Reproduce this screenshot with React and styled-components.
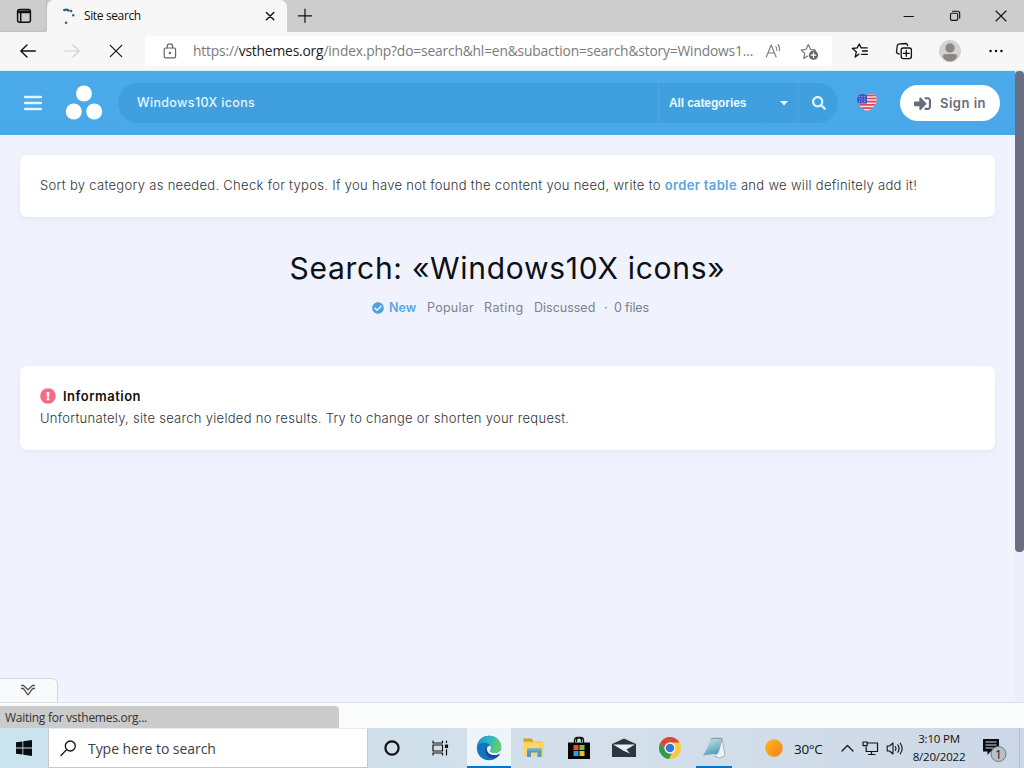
import React from 'react';
import styled, { createGlobalStyle } from 'styled-components';
import { FaSearch, FaSignInAlt, FaCheckCircle, FaExclamationCircle } from 'react-icons/fa';

const GlobalStyle = createGlobalStyle`
  * { box-sizing: border-box; }
  body { margin: 0; overflow: hidden; }
  svg { display: block; flex: none; }
`;

const segoe = `'Open Sans', 'Noto Sans', sans-serif`;
const mont = `Inter, 'Open Sans', sans-serif`;

const Screen = styled.div`
  width: 1024px;
  height: 768px;
  display: flex;
  flex-direction: column;
  overflow: hidden;
  background: #f0f3fe;
  font-family: ${segoe};
  color: #111;
`;

// one text part for everything, size and tracking vary
const Text = styled.span`
  white-space: nowrap;
  font-size: ${p => p.$size || 13}px;
  font-weight: ${p => p.$weight || 400};
  letter-spacing: ${p => p.$track || 0}px;
  color: ${p => p.$color || 'inherit'};
  line-height: 18px;
`;

const SiteLabel = styled(Text)`
  font-family: ${mont};
`;

const CategoryName = styled(Text)`
  font-family: 'Liberation Sans', Arial, sans-serif;
  font-size: 12px;
  font-weight: 700;
  letter-spacing: -0.1px;
  color: #e9faff;
`;

/* ---------- browser ---------- */
const TabStrip = styled.div`
  height: 32px;
  display: flex;
  background: #cdcdcd;
`;

const TabActions = styled.div`
  width: 47px;
  display: flex;
  align-items: center;
  justify-content: center;
  border-radius: 0 0 5px 0;
  box-shadow: inset -1px -1px 0 #bfbfbf;
`;

const Tab = styled.div`
  width: 240px;
  padding: 0 10px 0 14px;
  display: flex;
  align-items: center;
  background: #f7f7f7;
  border-radius: 7px 7px 0 0;
`;

const TabTitle = styled.div`
  flex: 1;
  display: flex;
  padding-left: 8px;
`;

const NewTab = styled.div`
  width: 36px;
  display: flex;
  align-items: center;
  justify-content: center;
`;

const WindowButtons = styled.div`
  margin-left: auto;
  display: flex;
`;

const WindowButton = styled.div`
  width: 46px;
  display: flex;
  align-items: center;
  justify-content: center;
`;

const Toolbar = styled.div`
  height: 39px;
  display: flex;
  align-items: center;
  background: #f7f7f7;
  border-bottom: 1px solid #d9f1f3;
`;

const ToolButton = styled.div`
  width: ${p => p.$w || 44}px;
  flex: none;
  display: flex;
  align-items: center;
  justify-content: center;
`;

const AddressBar = styled.div`
  width: 687px;
  height: 30px;
  margin-left: 1px;
  margin-right: 6px;
  padding-left: 18px;
  display: flex;
  align-items: center;
  background: #fff;
  border-radius: 4px;
`;

const Url = styled.div`
  width: 588px;
  padding: 0 0 0 16px;
  flex: none;
  display: flex;
`;

/* ---------- site ---------- */
const Viewport = styled.div`
  height: 631px;
  display: flex;
`;

const Page = styled.div`
  width: 1015px;
`;

const Scroll = styled.div`
  width: 9px;
  background: #eceefa;
`;

const Thumb = styled.div`
  height: 481px;
  background: #6b6e82;
  border-radius: 4px;
`;

const Header = styled.div`
  height: 64px;
  padding: 0 15px 0 24px;
  display: flex;
  align-items: center;
  background: linear-gradient(#4babe9, #48a8ea);
`;

const Logo = styled.div`
  width: 76px;
  padding-left: 23px;
`;

const SearchBox = styled.div`
  width: 720px;
  height: 40px;
  margin-right: 19px;
  display: flex;
  border-radius: 20px;
  background: #409fdf;
`;

const SearchPart = styled.div`
  width: ${p => p.$w}px;
  padding: ${p => p.$pad || 0};
  display: flex;
  align-items: center;
  justify-content: ${p => p.$justify || 'flex-start'};
  border-left: ${p => (p.$line ? '1px solid #4da7e6' : 'none')};
`;

const SignIn = styled.div`
  width: 100px;
  height: 36px;
  margin-left: auto;
  padding-left: 14px;
  display: flex;
  align-items: center;
  gap: 9px;
  border-radius: 18px;
  background: #fff;
  color: #676b7e;
`;

const Content = styled.div`
  padding: 20px 20px 0;
  display: flex;
  flex-direction: column;
`;

const Card = styled.div`
  height: ${p => p.$h}px;
  padding: ${p => p.$pad};
  border-radius: 7px;
  background: #fff;
  box-shadow: 0 1px 3px rgba(90, 100, 120, 0.06), 0 5px 14px rgba(120, 140, 130, 0.05);
`;

const Title = styled.h1`
  margin: 29px 0 0;
  height: 44px;
  text-align: center;
  font-family: ${mont};
  font-size: 30px;
  font-weight: 400;
  line-height: 44px;
  letter-spacing: 0.72px;
  white-space: nowrap;
  color: #0c0f16;
`;

const Sorting = styled.div`
  height: 18px;
  margin: 9px 0 49px;
  padding-left: 352px;
  display: flex;
  align-items: center;
  font-family: ${mont};
  color: #7d818d;
`;

const SortItem = styled.div`
  width: ${p => p.$w}px;
  display: flex;
  align-items: center;
  gap: 5px;
`;

const CardHead = styled.div`
  display: flex;
  align-items: center;
  gap: 7px;
  height: 20px;
`;

const CardText = styled.div`
  display: flex;
  font-family: ${mont};
  padding-top: ${p => p.$top || 0}px;
`;

/* ---------- bottom of the window ---------- */
const DrawerTab = styled.div`
  width: 58px;
  height: 24px;
  margin-top: -24px;
  display: flex;
  align-items: center;
  justify-content: center;
  padding-right: 2px;
  position: relative;
  background: #f9fafb;
  border: 1px solid #d3d5da;
  border-left: none;
  border-bottom: none;
  border-radius: 0 6px 0 0;
`;

const Drawer = styled.div`
  height: 26px;
  display: flex;
  align-items: flex-end;
  background: #fafbfb;
  border-top: 1px solid #dfe1e8;
`;

const Status = styled.div`
  width: 339px;
  height: 22px;
  padding: 2px 5px 0;
  display: flex;
  align-items: center;
  background: #cbcbcb;
  border-radius: 0 4px 0 0;
`;

const Taskbar = styled.div`
  height: 40px;
  display: flex;
  align-items: center;
  background: linear-gradient(90deg, #c9e3ef, #cfe0ea 35%, #d3dfea 60%, #ccd8e7);
`;

const TaskSearch = styled.div`
  width: 320px;
  height: 40px;
  flex: none;
  padding: 1px 0 0 11px;
  display: flex;
  align-items: center;
  gap: 11px;
  background: #fff;
  border: 1px solid #c3cacf;
  border-top-color: #e7ebee;
`;

const TaskItem = styled.div`
  width: ${p => p.$w || 45}px;
  height: 40px;
  padding-top: 2px;
  flex: none;
  display: flex;
  align-items: center;
  justify-content: center;
  background: ${p => (p.$active ? '#eef5fa' : 'transparent')};
  border-bottom: ${p => (p.$open ? '2px solid #0a74cc' : '2px solid transparent')};
`;

const OpenApp = styled(TaskItem)`
  margin: 0 5px 0 4px;
`;

const Tray = styled.div`
  margin-left: 28px;
  flex: 1;
  display: flex;
  align-items: center;
`;

const TrayText = styled.div`
  width: 53px;
  padding: 1px 0 0 11px;
  flex: none;
  display: flex;
`;

const Clock = styled.div`
  width: 64px;
  flex: none;
  display: flex;
  flex-direction: column;
  align-items: center;
`;

const Notices = styled.div`
  padding: 2px 0 0 10px;
  height: 40px;
  display: flex;
  align-items: center;
`;

const ShowDesktop = styled.div`
  height: 40px;
  margin-left: auto;
  width: 5px;
  border-left: 1px solid #b3bfcb;
`;

const Line = ({ w = 16, h = 16, color = '#111', sw = 1.2, children }) => (
  <svg width={w} height={h} viewBox={`0 0 ${w} ${h}`} fill="none" stroke={color}
    strokeWidth={sw} strokeLinecap="round" strokeLinejoin="round">{children}</svg>
);

function Browser() {
  return (
    <>
      <TabStrip>
        <TabActions>
          <Line sw={1.5}>
            <rect x="1.6" y="1.6" width="12.8" height="12.6" rx="2" />
            <path d="M2 3.4h12M2 4.2h12" strokeWidth="2" />
            <path d="M4.7 5v9" />
          </Line>
        </TabActions>
        <Tab>
          <Line w={15} color="#28608a" sw={2.4}>
            <path d="M3.2 2.1Q5.6 1 7.5 2.5M10.1 3h.1M12.2 7.2h.1" />
            <path d="M5 14.7h.1" />
          </Line>
          <TabTitle><Text $size={12} $track={-0.37}>Site search</Text></TabTitle>
          <Line w={14} h={14} sw={1.4}><path d="M3.4 3.4l7.4 7.4M10.8 3.4l-7.4 7.4" /></Line>
        </Tab>
        <NewTab><Line><path d="M8 1.2v13.2M1.4 7.8h13.2" /></Line></NewTab>
        <WindowButtons>
          <WindowButton><Line w={12} h={12} sw={1}><path d="M1 6.5h9.5" /></Line></WindowButton>
          <WindowButton>
            <Line w={12} h={12} sw={1.1}>
              <rect x="1.5" y="3.2" width="7.2" height="7.2" rx="1.3" />
              <path d="M3.5 1.3h5a2.2 2.2 0 0 1 2.2 2.2v4.8" />
            </Line>
          </WindowButton>
          <WindowButton><Line w={12} h={12} sw={1.1}><path d="M1 1l10 10M11 1L1 11" /></Line></WindowButton>
        </WindowButtons>
      </TabStrip>
      <Toolbar>
        <ToolButton $w={56}><Line w={18} h={14} sw={1.4}><path d="M16.3 7H2M8 1L1.8 7 8 13" /></Line></ToolButton>
        <ToolButton $w={32}><Line w={18} h={14} color="#d0d0d0"><path d="M1.5 7h15M10 1l6.3 6-6.3 6" /></Line></ToolButton>
        <ToolButton $w={56}><Line w={14} h={14} sw={1.2}><path d="M1.3 1.3l11.4 11.4M12.7 1.3L1.3 12.7" /></Line></ToolButton>
        <AddressBar>
          <Line w={14} h={16} color="#666">
            <rect x="1.2" y="5" width="11.4" height="9.8" rx="1.4" />
            <path d="M4.2 5V3.5a2.7 2.7 0 0 1 5.4 0V5" />
            <circle cx="6.9" cy="9.9" r=".6" fill="#555" />
          </Line>
          <Url>
            <Text $size={13.8} $color="#7a7a7a" $track={-0.17}>
              https://<Text $size={13.8} $color="#222" $track={-0.17}>vsthemes.org</Text>
              /index.php?do=search&amp;hl=en&amp;subaction=search&amp;story=Windows1...
            </Text>
          </Url>
          <Line w={18} h={16} color="#777" sw={1.1}>
            <path d="M1.3 14L6.2 2l4.9 12M3 10h6.5M10.8 3.5q1.5 1.8.9 3.8M13 1.6q2.3 2.9 1.3 6.2" />
          </Line>
          <ToolButton $w={53}>
            <Line w={19} h={17} color="#777">
              <path d="M7.7 13.1L3.8 15.4l.9-5L1.2 7l4.9-.7L8.3 1.6l2.2 4.7 4.9.7-1.8 1.8" />
              <circle cx="13.5" cy="12.2" r="4.6" fill="#666" stroke="none" />
              <path d="M11.2 12.2h4.6M13.5 9.9v4.6" stroke="#fff" />
            </Line>
          </ToolButton>
        </AddressBar>
        <ToolButton>
          <Line w={18} h={16} sw={1.3}>
            <path d="M8.1 11.1l-3.9 3 1.1-5.3L1.3 5.5l4.9-.6L8.2 1l2 3.9h6M11.4 8h5M10.6 11.3h5.8" />
          </Line>
        </ToolButton>
        <ToolButton>
          <Line w={18} h={18} sw={1.3}>
            <rect x="6.2" y="6" width="10.2" height="10.6" rx="2" />
            <path d="M11.3 8.3v6M8.3 11.3h6M4.2 12.1L2.6 11.4a2 2 0 0 1-.9-2.7L2.2 4A2.6 2.6 0 0 1 4.7 1.8l6-.3A2 2 0 0 1 12.6 3.6" />
          </Line>
        </ToolButton>
        <ToolButton $w={48}>
          <svg width="22" height="22" viewBox="0 0 22 22">
            <circle cx="11" cy="11" r="11" fill="#d5d3d2" />
            <circle cx="11" cy="8" r="4.7" fill="#8a8785" />
            <path d="M3.6 16.2Q4 14 7 14h8q3 0 3.4 2.2Q16 21.4 11 21.5T3.6 16.2Z" fill="#8a8785" />
          </svg>
        </ToolButton>
        <ToolButton><Line w={14} h={4} sw={2.4}><path d="M1.5 2h.1M7 2h.1M12.4 2h.1" /></Line></ToolButton>
      </Toolbar>
    </>
  );
}

function FlagHeart() {
  return (
    <svg width="20" height="18" viewBox="0 0 20 18">
      <clipPath id="heart"><path d="M10 18C6.5 15 0 11.5 0 5.5 0 2 2.3 0 5 0c2.4 0 4.1 .5 5 1.3C10.9.5 12.6 0 15 0c2.7 0 5 2 5 5.5C20 11.5 13.5 15 10 18Z" /></clipPath>
      <g clipPath="url(#heart)">
        <rect width="20" height="18" fill="#f4dfe5" />
        <path d="M0 1.3h20M0 4.5h20M0 7.7h20M0 10.9h20M0 14.1h20M0 17.3h20" stroke="#dd4a5c" strokeWidth="1.7" />
        <rect width="10" height="9.6" fill="#4553c8" />
        <path d="M2 2.5h7M2 5h7M2 7.5h7" stroke="#a9b3f0" strokeWidth=".9" strokeDasharray="1 1.5" />
      </g>
    </svg>
  );
}

function Site() {
  const body = { $size: 13, $weight: 300, $color: '#30333a' };
  return (
    <Viewport>
      <Page>
        <Header>
          <svg width="18" height="16" viewBox="0 0 18 16">
            <path d="M1.2 2h15.6M1.2 8h15.6M1.2 14h15.6" stroke="#dff6fd" strokeWidth="2.6" strokeLinecap="round" />
          </svg>
          <Logo>
            <svg width="38" height="36" viewBox="0 0 38 36" fill="#fff">
              <circle cx="19" cy="8.5" r="8" /><circle cx="8.8" cy="26.5" r="8" /><circle cx="29.2" cy="26.5" r="8" />
            </svg>
          </Logo>
          <SearchBox>
            <SearchPart $w={540} $pad="0 0 0 19px">
              <SiteLabel $size={12.5} $weight={500} $track={0.36} $color="#e2f7ff">Windows10X icons</SiteLabel>
            </SearchPart>
            <SearchPart $w={140} $pad="0 10px" $line $justify="space-between">
              <CategoryName>All categories</CategoryName>
              <svg width="8" height="5" viewBox="0 0 8 5"><path d="M0 0h8L4 4.5Z" fill="#e9f9ff" /></svg>
            </SearchPart>
            <SearchPart $w={40} $line $justify="center"><FaSearch size={14} color="#d9f4fd" /></SearchPart>
          </SearchBox>
          <FlagHeart />
          <SignIn>
            <FaSignInAlt size={17} />
            <SiteLabel $size={13} $weight={600} $track={0.5}>Sign in</SiteLabel>
          </SignIn>
        </Header>
        <Content>
          <Card $h={62} $pad="21px 20px">
            <CardText>
              <Text {...body} $track={0.31}>
                Sort by category as needed. Check for typos. If you have not found the content you need, write to{' '}
                <Text $size={13} $weight={600} $track={0.35} $color="#5aa5e0">order table</Text> and we will definitely add it!
              </Text>
            </CardText>
          </Card>
          <Title>Search: «Windows10X icons»</Title>
          <Sorting>
            <SortItem $w={55}>
              <FaCheckCircle size={12} color="#51a0dc" />
              <Text $size={12.5} $weight={600} $color="#5ba6e0">New</Text>
            </SortItem>
            <SortItem $w={57}><Text $size={12.5} $track={0.25}>Popular</Text></SortItem>
            <SortItem $w={50}><Text $size={12.5} $track={0.4}>Rating</Text></SortItem>
            <SortItem $w={70}><Text $size={12.5}>Discussed</Text></SortItem>
            <SortItem $w={10}><Text $size={12.5}>·</Text></SortItem>
            <SortItem $w={40}><Text $size={12.5} $track={-0.15}>0 files</Text></SortItem>
          </Sorting>
          <Card $h={84} $pad="20px">
            <CardHead>
              <FaExclamationCircle size={16} color="#f76c83" />
              <SiteLabel $size={13} $weight={600} $track={0.5}>Information</SiteLabel>
            </CardHead>
            <CardText $top={3}>
              <Text {...body} $track={0.29}>Unfortunately, site search yielded no results. Try to change or shorten your request.</Text>
            </CardText>
          </Card>
        </Content>
      </Page>
      <Scroll><Thumb /></Scroll>
    </Viewport>
  );
}

function EdgeLogo() {
  return (
    <svg width="26" height="26" viewBox="0 0 26 26">
      <defs>
        <linearGradient id="wave" x1="0" x2="1" y2=".3">
          <stop stopColor="#188bd2" /><stop offset=".55" stopColor="#31b9c2" /><stop offset="1" stopColor="#62cf69" />
        </linearGradient>
      </defs>
      <circle cx="13" cy="13" r="12.2" fill="#1473bd" />
      <path d="M1 12C1.6 5.5 6.6.8 13 .8c7 0 12.2 4.700 12.2 10.700 0 4-3 6.500-6.800 6.500-3 0-4.600-1.200-4.600-2 0-.7 1.200-1.200 1.200-3.100C15 10 12 7.500 8.500 7.500 4.800 7.500 2.200 9.500 1 12Z" fill="url(#wave)" />
      <path d="M9.8 12.5C7.8 18 12 24 18.500 23.300c2.500-.8 4.500-2.300 5.600-4.300-4 2-9.600 1.500-11.600-2.500Z" fill="#124c93" />
      <path d="M14.300 10.500c-2.500.3-3.700 2.200-3.300 4.600.6 3.600 4.900 5.600 9.200 4.800 2.300-.4 4-1.300 5-2.100l.6-3.500-2.200 1.900c-1.500 1.300-3.200 1.800-5.200 1.800-3 0-4.600-1.200-4.600-2 0-.7 1.200-1.200 1.200-3.100Z" fill="#eef5fa" />
    </svg>
  );
}

function Bottom() {
  return (
    <>
      <DrawerTab>
        <Line w={16} h={13} color="#555" sw={1.3}>
          <path d="M1.500 1.500h2L8 5.800l4.500-4.300h2M1.500 4.500h1.800L8 10.800l4.700-6.300h1.800" />
        </Line>
      </DrawerTab>
      <Drawer>
        <Status><Text $size={12} $track={-0.27} $color="#333">Waiting for vsthemes.org...</Text></Status>
      </Drawer>
      <Taskbar>
        <TaskItem $w={48}>
          <svg width="16" height="16" viewBox="0 0 16 16" fill="#080d12">
            <path d="M0 2.3L6.5 1.4v6.2H0ZM7.3 1.3L16 0v7.6H7.3ZM0 8.4h6.5v6.2L0 13.7ZM7.3 8.4H16V16l-8.7-1.3Z" />
          </svg>
        </TaskItem>
        <TaskSearch>
          <Line w={17} h={17} sw={1.3}><circle cx="10.3" cy="6" r="5" /><path d="M6.6 9.6L1 15.5" /></Line>
          <Text $size={14} $color="#3e3e3e" $track={-0.05}>Type here to search</Text>
        </TaskSearch>
        <TaskItem $w={48}><Line w={18} h={18} sw={2.2}><circle cx="9" cy="9" r="6.6" /></Line></TaskItem>
        <TaskItem $w={47}>
          <Line w={18} h={16} sw={1.2}>
            <path d="M2 1v2h9.5V1M2 15v-2h9.5v2M15.5 1v1.5M15.5 9.5V15" />
            <rect x="2" y="5" width="9.5" height="6" />
            <rect x="14.5" y="5" width="2" height="2.5" fill="#111" />
          </Line>
        </TaskItem>
        <TaskItem $w={4} />
        <TaskItem $w={44} $active $open><EdgeLogo /></TaskItem>
        <TaskItem $w={46}>
          <svg width="22" height="20" viewBox="0 0 22 20">
            <path d="M.5 1h8l2 2H20v15H1Z" fill="#f6cc52" />
            <path d="M.5.5h8.300l1.500 3H.5Z" fill="#dc9b22" />
            <path d="M1 5h20v13H1Z" fill="#fbd568" />
            <path d="M4 10.5h14.5V19h-4v-4.500H8V19H4Z" fill="#569bbd" />
            <path d="M4 10.5h14.5v2H4Z" fill="#71b4cc" />
          </svg>
        </TaskItem>
        <TaskItem $w={44}>
          <svg width="24" height="24" viewBox="0 0 24 24">
            <path d="M7.5 7V4q0-2.500 3-2.500h3q3 0 3 2.500v3M9.5 6V3.5Q12 0 14.5 3.5V6" fill="none" stroke="#111" strokeWidth="1.3" />
            <path d="M1 6.500h22V23H1Z" fill="#080808" />
            <path d="M6.500 9h5v5h-5Z" fill="#eb4f29" /><path d="M12.500 9h5v5h-5Z" fill="#80bd31" />
            <path d="M6.500 15h5v5h-5Z" fill="#26a2e2" /><path d="M12.500 15h5v5h-5Z" fill="#f5b82e" />
          </svg>
        </TaskItem>
        <TaskItem $w={46}>
          <svg width="24" height="20" viewBox="0 0 24 20">
            <path d="M0 6L12 .5 24 6v13H0Z" fill="#2d343d" />
            <path d="M1 6.500h22l-8.500 5L18 15.500 12 13Z" fill="#e4edf3" />
          </svg>
        </TaskItem>
        <TaskItem $w={45}>
          <svg width="22" height="22" viewBox="0 0 22 22">
            <circle cx="11" cy="11" r="11" fill="#f9ca3b" />
            <path d="M1.5 5.5A11 11 0 0 1 20.5 5.5H11a5.5 5.5 0 0 0-4.800 8.200Z" fill="#dc4538" />
            <path d="M1.5 5.5l4.700 8.200A5.5 5.5 0 0 0 13 16l-3 6A11 11 0 0 1 1.5 5.5Z" fill="#2d9b52" />
            <circle cx="11" cy="11" r="5.5" fill="#f8fafc" /><circle cx="11" cy="11" r="4.3" fill="#3278dc" />
          </svg>
        </TaskItem>
        <OpenApp $w={36} $open>
          <svg width="24" height="22" viewBox="0 0 24 22">
            <defs>
              <linearGradient id="note" x2=".4" y2="1"><stop stopColor="#d4eaef" /><stop offset="1" stopColor="#559fb7" /></linearGradient>
            </defs>
            <path d="M8.5 2Q14 .5 20 1.5L16.5 17Q9 16.500 1 18.500 6 11 8.500 2Z" fill="url(#note)" />
            <path d="M20 1.5l3 17-5.5 2.5-5-2q4-2 5-7Z" fill="#eef3f3" stroke="#8a9ba3" strokeWidth=".7" />
            <path d="M8.5 2Q14 .5 20 1.5" fill="none" stroke="#80939c" />
          </svg>
        </OpenApp>
        <Tray>
          <svg width="18" height="18" viewBox="0 0 18 18">
            <defs><linearGradient id="sun" x2="1" y2="1"><stop stopColor="#ffb51e" /><stop offset="1" stopColor="#f38417" /></linearGradient></defs>
            <circle cx="9" cy="9" r="8.7" fill="url(#sun)" />
          </svg>
          <TrayText><Text $size={13.5} $track={-0.3}>30°C</Text></TrayText>
          <ToolButton $w={22}><Line w={13} h={8} sw={1.3}><path d="M1 7l5.5-5.5L12 7" /></Line></ToolButton>
          <ToolButton $w={25}>
            <Line w={17} h={15} sw={1.2}>
              <path d="M5.5 2h10v8.5H4.2V6M9.5 10.5v3M6.500 13.500H13" />
              <rect x="1" y="1" width="4.2" height="3.6" />
            </Line>
          </ToolButton>
          <ToolButton $w={24}>
            <Line w={18} h={15} sw={1.1}>
              <path d="M1.2 5h2.3L7 2v11L3.5 10H1.2ZM9.3 5.500q1.300 2 0 4M11.8 3.800q2.500 3.700 0 7.400M14.300 2.200q3.700 5.300 0 10.600" />
            </Line>
          </ToolButton>
          <Clock>
            <Text $size={11.5} $track={-0.2}>3:10 PM</Text>
            <Text $size={11.5} $track={-0.2}>8/20/2022</Text>
          </Clock>
          <Notices>
            <svg width="26" height="26" viewBox="0 0 26 26">
              <path d="M2 3h16v12.5H9.500L6.500 19v-3.500H2Z" fill="#0a0d12" />
              <path d="M4.5 6h11M4.5 9h11M4.5 12h8" stroke="#ccd8e7" strokeWidth="1.2" />
              <circle cx="17.5" cy="18" r="7.5" fill="#b9c1c8" stroke="#737a80" />
              <text x="17.5" y="22.5" textAnchor="middle" fontFamily="Open Sans" fontSize="12" fill="#111">1</text>
            </svg>
          </Notices>
          <ShowDesktop />
        </Tray>
      </Taskbar>
    </>
  );
}

export default function App() {
  return (
    <Screen>
      <GlobalStyle />
      <Browser />
      <Site />
      <Bottom />
    </Screen>
  );
}
